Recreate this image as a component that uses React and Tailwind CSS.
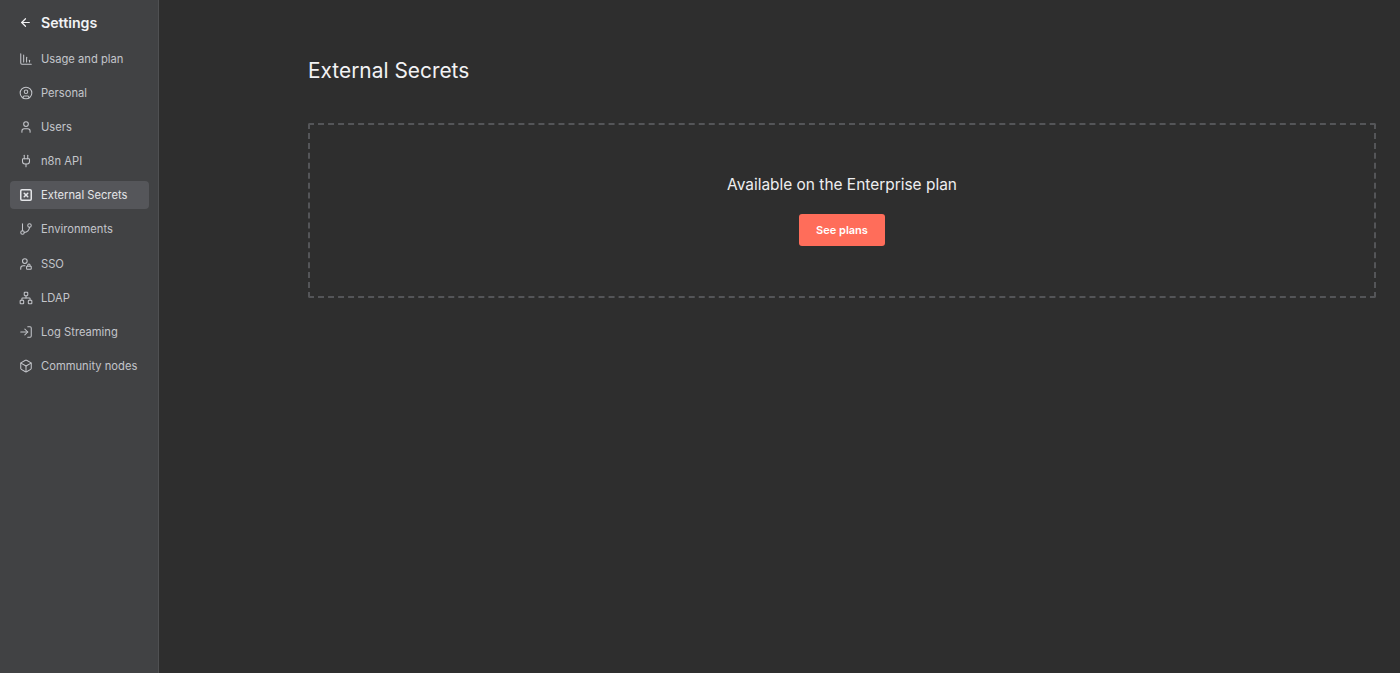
import React from "react";
import {
  ArrowLeft,
  ChartColumnDecreasing,
  CircleUser,
  User,
  Plug,
  SquareX,
  GitBranch,
  UserLock,
  Network,
  LogIn,
  Box,
} from "lucide-react";

const items = [
  { label: "Usage and plan", icon: ChartColumnDecreasing },
  { label: "Personal", icon: CircleUser },
  { label: "Users", icon: User },
  { label: "n8n API", icon: Plug },
  { label: "External Secrets", icon: SquareX, active: true },
  { label: "Environments", icon: GitBranch },
  { label: "SSO", icon: UserLock },
  { label: "LDAP", icon: Network },
  { label: "Log Streaming", icon: LogIn },
  { label: "Community nodes", icon: Box },
];

function NavItem({ label, icon: Icon, active }) {
  return (
    <a className={`flex items-center h-[28px] rounded-[4px] pl-[9px] ${active ? "bg-[#55565a] text-[#e4e5e8]" : "text-[#c3c5ca]"}`}>
      <Icon size={14} strokeWidth={active ? 2.6 : 1.8} className="w-[14px] h-[14px] shrink-0" />
      <span className="ml-[8px] text-[11.2px] leading-[28px] font-normal whitespace-nowrap">{label}</span>
    </a>
  );
}

export default function App() {
  return (
    <div className="flex h-[673px] w-[1400px] overflow-hidden bg-[#2e2e2e] font-['Inter',sans-serif]">
      <aside className="w-[159px] shrink-0 bg-[#414244] border-r border-[#4f5052] pl-[10px] pr-[9.5px]">
        <div className="flex items-center h-[44.6px] pl-[9px] text-[#f2f2f4]">
          <ArrowLeft size={13} strokeWidth={2.2} />
          <h1 className="ml-[9px] text-[14.2px] font-semibold">Settings</h1>
        </div>
        <nav className="flex flex-col gap-[6.17px]">
          {items.map((item) => (
            <NavItem key={item.label} {...item} />
          ))}
        </nav>
      </aside>

      <main className="flex-1 pl-[149px] pr-[24px] pt-[56px]">
        <h2 className="text-[20.9px] leading-[30px] font-normal text-[#f2f2f4]">External Secrets</h2>
        <div className="mt-[37px] h-[175px] flex flex-col items-center rounded-[2px] border-2 border-dashed border-[#545558] pt-[49px]">
          <p className="text-[15.45px] leading-[22px] text-[#eeeef0]">Available on the Enterprise plan</p>
          <button className="mt-[18px] h-[32px] w-[86px] rounded-[3px] bg-[#ff6d5a] text-[11px] font-semibold text-white">
            See plans
          </button>
        </div>
      </main>
    </div>
  );
}
